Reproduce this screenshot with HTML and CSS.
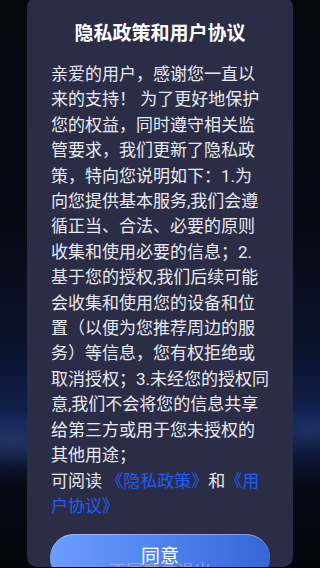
FILE: index.html
```html
<!DOCTYPE html>
<html lang="zh-CN">
<head>
<meta charset="utf-8">
<meta name="viewport" content="width=device-width, initial-scale=1">
<title>隐私政策和用户协议</title>
<link rel="stylesheet" href="styles.css">
</head>
<body>
<div class="screen">
  <div class="dialog">
    <h1 class="dialog-title">隐私政策和用户协议</h1>
    <p class="dialog-body">亲爱的用户，感谢您一直以<br>来的支持！ 为了更好地保护<br>您的权益，同时遵守相关监<br>管要求，我们更新了隐私政<br>策，特向您说明如下：1.为<br>向您提供基本服务,我们会遵<br>循正当、合法、必要的原则<br>收集和使用必要的信息；2.<br>基于您的授权,我们后续可能<br>会收集和使用您的设备和位<br>置（以便为您推荐周边的服<br>务）等信息，您有权拒绝或<br>取消授权；3.未经您的授权同<br>意,我们不会将您的信息共享<br>给第三方或用于您未授权的<br>其他用途；<br>可阅读 <a class="link" href="#">《隐私政策》</a>和<a class="link" href="#">《用<br>户协议》</a></p>
    <button class="btn-agree" type="button">同意</button>
    <div class="btn-cancel">不同意并退出</div>
  </div>
</div>
</body>
</html>
```

FILE: styles.css
```css
html, body {
  margin: 0;
  padding: 0;
  height: 100%;
  overflow: hidden;
}

body {
  font-family: Roboto, "Noto Sans CJK SC", "Noto Sans", sans-serif;
  background: #05060e;
}

.screen {
  width: 320px;
  height: 568px;
  display: flex;
  justify-content: center;
  align-items: flex-start;
  background:
    radial-gradient(ellipse 90px 30px at 10px 440px, rgba(60, 80, 140, 0.45), rgba(60, 80, 140, 0) 100%),
    radial-gradient(ellipse 60px 26px at 310px 430px, rgba(50, 70, 130, 0.45), rgba(50, 70, 130, 0) 100%),
    linear-gradient(180deg, #06070f 0%, #070914 40%, #0b132e 62%, #102050 74%, #0d1838 80%, #060914 86%, #04050c 100%);
}

.dialog {
  box-sizing: border-box;
  width: 266px;
  height: 570px;
  margin-top: -3px;
  padding: 24px 24px 0;
  background: #2b2d46;
  border-radius: 10px;
  overflow: hidden;
  display: flex;
  flex-direction: column;
  align-items: stretch;
}

.dialog-title {
  margin: 0;
  font-size: 19px;
  line-height: 26px;
  font-weight: 700;
  color: #ffffff;
  text-align: center;
}

.dialog-body {
  margin: 15px 0 0;
  font-size: 17px;
  line-height: 25.4px;
  color: #e8e9f0;
  white-space: nowrap;
}

.link {
  color: #1f5ff5;
  text-decoration: none;
}

.btn-agree {
  flex: none;
  align-self: center;
  width: 220px;
  height: 48px;
  margin-top: 15px;
  border: none;
  border-radius: 24px;
  background: linear-gradient(90deg, #6c9dff 0%, #4f83ef 50%, #3566da 100%);
  box-shadow: inset 0 1px 0 rgba(255, 255, 255, 0.35);
  color: #ffffff;
  font-family: inherit;
  font-size: 19px;
  line-height: 26px;
  padding: 0 0 2px;
}

.btn-cancel {
  margin-top: -23px;
  text-align: center;
  font-size: 17px;
  line-height: 25px;
  color: rgba(170, 174, 190, 0.75);
}
```
